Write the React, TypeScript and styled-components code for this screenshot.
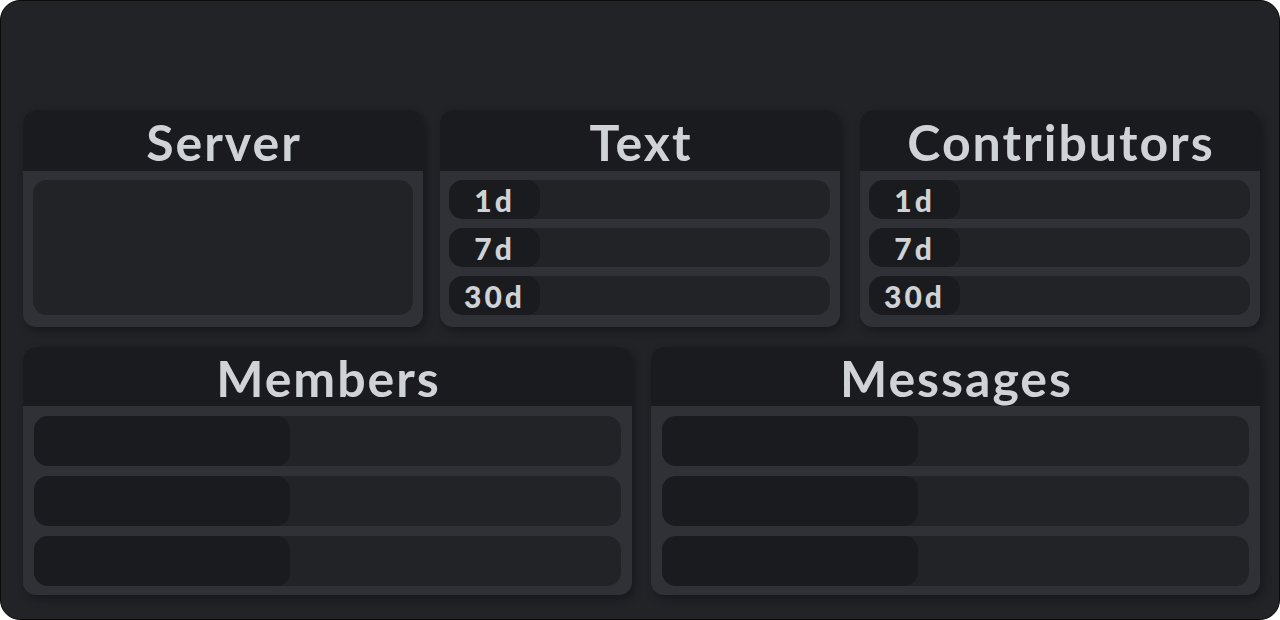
import React from "react";
import styled, { createGlobalStyle } from "styled-components";

const Global = createGlobalStyle`
  html, body { margin: 0; padding: 0; background: #ffffff; }
  * { box-sizing: border-box; }
`;

const Frame = styled.div`
  width: 1280px;
  height: 620px;
  background: #222327;
  border: 1px solid #0b0b0c;
  border-radius: 20px;
  padding: 109px 19px 0 22px;
  display: flex;
  flex-direction: column;
  gap: 20px;
  font-family: Lato, "Liberation Sans", sans-serif;
  overflow: hidden;
`;

const TopRow = styled.div`
  display: grid;
  grid-template-columns: repeat(3, 400px);
  justify-content: space-between;
  height: 217px;
`;

const BottomRow = styled.div`
  display: grid;
  grid-template-columns: repeat(2, 609px);
  column-gap: 19px;
  height: 248px;
`;

const Card = styled.section<{ $shift?: number }>`
  display: flex;
  flex-direction: column;
  border-radius: 13px;
  overflow: hidden;
  background: #303136;
  box-shadow: 3px 4px 8px rgba(0, 0, 0, 0.32);
  margin-left: ${(p) => p.$shift ?? 0}px;
  justify-self: start;
  width: 100%;
  max-width: 609px;
`;

const TopCard = styled(Card)`
  width: 400px;
`;

const Header = styled.h2<{ $h: number }>`
  margin: 0;
  height: ${(p) => p.$h}px;
  flex: none;
  background: #1a1b1e;
  color: #cfd2d6;
  font-size: 50px;
  font-weight: 700;
  letter-spacing: 2px;
  padding: 2px 0 0 2px;
  line-height: 1;
  display: flex;
  align-items: center;
  justify-content: center;
`;

const Body = styled.div<{ $pad: string; $gap: number }>`
  flex: 1;
  display: flex;
  flex-direction: column;
  gap: ${(p) => p.$gap}px;
  padding: ${(p) => p.$pad};
`;

const Panel = styled.div`
  flex: 1;
  background: #222327;
  border-radius: 14px;
`;

const Row = styled.div<{ $h: number }>`
  height: ${(p) => p.$h}px;
  flex: none;
  display: flex;
  background: #222327;
  border-radius: 14px;
  overflow: hidden;
`;

const Pill = styled.div<{ $w: number }>`
  width: ${(p) => p.$w}px;
  flex: none;
  background: #1a1b1e;
  border-radius: 14px;
  color: #cfd2d6;
  font-size: 30px;
  font-weight: 900;
  letter-spacing: 3px;
  line-height: 1;
  display: flex;
  align-items: center;
  justify-content: center;
`;

const periods = ["1d", "7d", "30d"];

const PeriodCard = ({ title, shift }: { title: string; shift?: number }) => (
  <TopCard $shift={shift}>
    <Header $h={61}>{title}</Header>
    <Body $pad="9px 10px 12px 9px" $gap={9}>
      {periods.map((p) => (
        <Row key={p} $h={39}>
          <Pill $w={91}>{p}</Pill>
        </Row>
      ))}
    </Body>
  </TopCard>
);

const BarCard = ({ title }: { title: string }) => (
  <Card>
    <Header $h={59}>{title}</Header>
    <Body $pad="10px 11px 9px 11px" $gap={10}>
      {[0, 1, 2].map((i) => (
        <Row key={i} $h={50}>
          <Pill $w={256} />
        </Row>
      ))}
    </Body>
  </Card>
);

export default function App() {
  return (
    <>
      <Global />
      <Frame>
        <TopRow>
          <TopCard>
            <Header $h={61}>Server</Header>
            <Body $pad="9px 10px 12px 10px" $gap={0}>
              <Panel />
            </Body>
          </TopCard>
          <PeriodCard title="Text" shift={-1.5} />
          <PeriodCard title="Contributors" />
        </TopRow>
        <BottomRow>
          <BarCard title="Members" />
          <BarCard title="Messages" />
        </BottomRow>
      </Frame>
    </>
  );
}
